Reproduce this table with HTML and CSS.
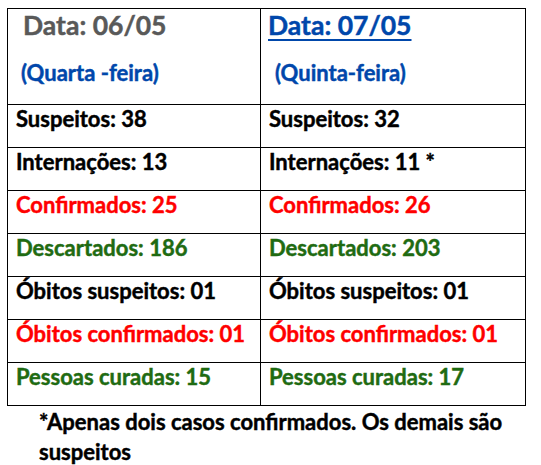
FILE: index.html
```html
<!DOCTYPE html>
<html lang="pt">
<head>
<meta charset="utf-8">
<link rel="stylesheet" href="styles.css">
</head>
<body>
<table class="stats">
  <colgroup><col class="c1"><col class="c2"></colgroup>
  <tr class="head">
    <td><div class="date gray">Data: 06/05</div><div class="day">(Quarta -feira)</div></td>
    <td><div class="date blue u">Data: 07/05</div><div class="day day2">(Quinta-feira)</div></td>
  </tr>
  <tr><td>Suspeitos: 38</td><td>Suspeitos: 32</td></tr>
  <tr><td>Internações: 13</td><td>Internações: 11 *</td></tr>
  <tr class="red"><td>Confirmados: 25</td><td>Confirmados: 26</td></tr>
  <tr class="green"><td>Descartados: 186</td><td>Descartados: 203</td></tr>
  <tr><td>Óbitos suspeitos: 01</td><td>Óbitos suspeitos: 01</td></tr>
  <tr class="red"><td>Óbitos confirmados: 01</td><td>Óbitos confirmados: 01</td></tr>
  <tr class="green"><td>Pessoas curadas: 15</td><td>Pessoas curadas: 17</td></tr>
</table>
<p class="note">*Apenas dois casos confirmados. Os demais são suspeitos</p>
</body>
</html>
```
FILE: styles.css
```css
html, body { margin: 0; padding: 0; background: #fff; }
body {
  font-family: "Lato", "Open Sans", sans-serif;
  font-weight: 700;
  color: #000;
  padding: 8px 0 0 7px;
  -webkit-text-stroke: 0.45px currentColor;
}
.stats {
  border-collapse: collapse;
  width: 518px;
  table-layout: fixed;
}
.c1 { width: 253px; }
.c2 { width: 265px; }
.stats td {
  border: 1px solid #000;
  height: 43px;
  padding: 1px 0 0 8px;
  vertical-align: top;
  font-size: 22px;
  line-height: 26px;
  box-sizing: border-box;
}
.stats tr.head td { height: 96px; padding: 0 0 0 15px; }
.stats tr.head td + td { padding-left: 7px; }
.date { font-size: 26.5px; line-height: 32px; }
.gray { color: #595959; }
.blue { color: #0047AB; }
.u { text-decoration: underline; text-decoration-thickness: 2px; text-underline-offset: 4px; }
.day { color: #0047AB; font-size: 22px; line-height: 26px; margin-top: 19px; margin-left: -2px; }
.day2 { margin-left: 7px; }
.red td { color: #FF0000; }
.green td { color: #1F6B12; }
.note {
  margin: 1px 0 0 32px;
  width: 490px;
  font-size: 22px;
  line-height: 30px;
}
```
